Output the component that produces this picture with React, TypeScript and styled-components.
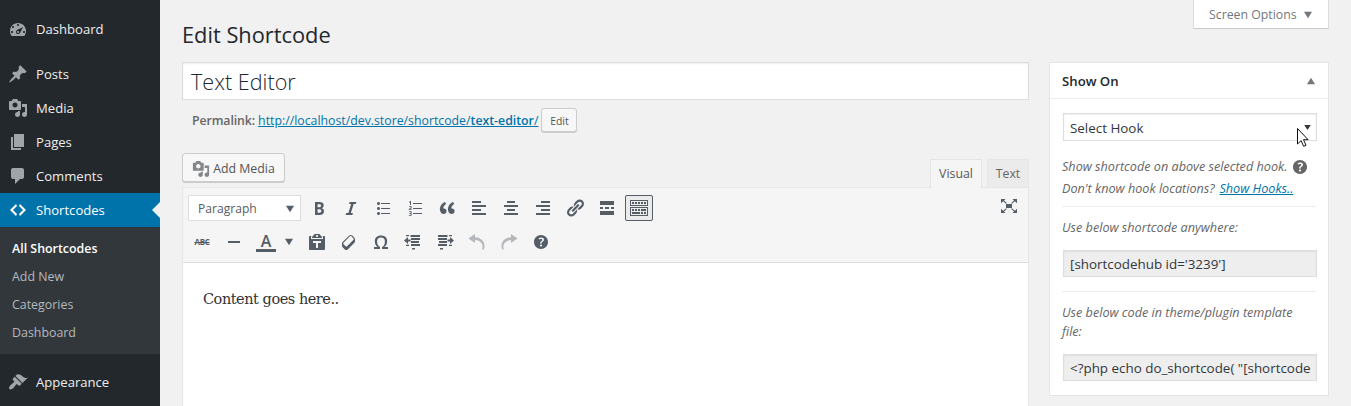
import React from "react";
import styled, { createGlobalStyle } from "styled-components";

const GlobalStyle = createGlobalStyle`
  *, *::before, *::after { box-sizing: border-box; }
  body { margin: 0; background: #f1f1f1; overflow: hidden; }
`;

const icons = {
  dashboard: "M3.76 17.01h12.48C17.34 15.63 18 13.9 18 12c0-4.41-3.58-8-8-8s-8 3.59-8 8c0 1.9.66 3.63 1.76 5.01zM9 6c0-.55.45-1 1-1s1 .45 1 1c0 .56-.45 1-1 1s-1-.44-1-1zM4 8c0-.55.45-1 1-1s1 .45 1 1c0 .56-.45 1-1 1s-1-.44-1-1zm4.52 3.4c.84-.83 6.51-3.5 6.51-3.5s-2.66 5.68-3.49 6.51c-.84.84-2.18.84-3.02 0-.83-.83-.83-2.18 0-3.01zM3 13c0-.55.45-1 1-1s1 .45 1 1c0 .56-.45 1-1 1s-1-.44-1-1zm6 0c0-.55.45-1 1-1s1 .45 1 1c0 .56-.45 1-1 1s-1-.44-1-1zm6 0c0-.55.45-1 1-1s1 .45 1 1c0 .56-.45 1-1 1s-1-.44-1-1z",
  post: "M10.44 3.02l1.82-1.82 6.36 6.35-1.83 1.82c-1.05-.68-2.48-.57-3.41.36l-.75.75c-.92.93-1.04 2.35-.35 3.41l-1.83 1.82-2.41-2.41-2.8 2.79c-.42.42-3.38 2.71-3.8 2.29s1.86-3.39 2.28-3.81l2.79-2.79L4.1 9.36l1.83-1.82c1.05.69 2.48.57 3.4-.36l.75-.75c.93-.92 1.05-2.35.36-3.41z",
  media: "M13 11V4c0-.55-.45-1-1-1h-1.67L9 1H5L3.67 3H2c-.55 0-1 .45-1 1v7c0 .55.45 1 1 1h10c.55 0 1-.45 1-1zM7 4.5c1.38 0 2.5 1.12 2.5 2.5S8.38 9.5 7 9.5 4.5 8.38 4.5 7 5.62 4.5 7 4.5zM14 6h5v10.5c0 1.38-1.12 2.5-2.5 2.5S14 17.88 14 16.5s1.12-2.5 2.5-2.5c.17 0 .34.02.5.05V9h-3V6zm-4 8.05V13h2v3.5c0 1.38-1.12 2.5-2.5 2.5S7 17.88 7 16.5 8.12 14 9.5 14c.17 0 .34.02.5.05z",
  page: "M6 15V2h10v13H6zm-1 1h8v2H3V5h2v11z",
  comments: "M5 2h9c1.1 0 2 .9 2 2v7c0 1.1-.9 2-2 2h-2l-5 5v-5H5c-1.1 0-2-.9-2-2V4c0-1.1.9-2 2-2z",
  code: "M9 6l-4 4 4 4-1 2-6-6 6-6zm2 8l4-4-4-4 1-2 6 6-6 6z",
  appearance: "M14.48 11.06L7.41 3.99l1.5-1.5c.5-.56 2.3-.47 3.51.32 1.21.8 1.43 1.28 2.91 2.1 1.18.64 2.45 1.26 4.45.85zm-.71.71L6.7 4.7 4.93 6.47c-.39.39-.39 1.02 0 1.41l1.06 1.06c.39.39.39 1.03 0 1.42-.6.6-1.43 1.11-2.21 1.69-.35.26-.7.53-1.01.84C1.43 14.23.4 16.08 1.4 17.07c.99 1 2.84-.03 4.18-1.36.31-.31.58-.66.85-1.02.57-.78 1.08-1.61 1.69-2.21.39-.39 1.02-.39 1.41 0l1.06 1.06c.39.39 1.02.39 1.41 0z",
  bold: "M6 4v13h4.54c1.37 0 2.46-.33 3.26-1 .8-.66 1.2-1.58 1.2-2.77 0-.84-.17-1.51-.51-2.01s-.9-.85-1.67-1.03v-.09c.57-.1 1.02-.4 1.36-.9s.51-1.13.51-1.91c0-1.14-.39-1.98-1.17-2.5C12.75 4.26 11.5 4 9.78 4H6zm2.57 5.15V6.26h1.36c.73 0 1.27.11 1.61.32.34.22.51.58.51 1.07 0 .54-.16.92-.47 1.15s-.82.35-1.51.35h-1.5zm0 2.19h1.6c1.44 0 2.16.53 2.16 1.61 0 .6-.17 1.05-.51 1.34s-.86.43-1.57.43H8.57v-3.38z",
  italic: "M14.78 6h-2.13l-2.8 9h2.12l-.62 2H4.6l.62-2h2.14l2.8-9H8.03l.62-2h6.75z",
  bullets: "M5.5 7C4.67 7 4 6.33 4 5.5 4 4.68 4.67 4 5.5 4 6.32 4 7 4.68 7 5.5 7 6.33 6.32 7 5.5 7zM8 5h9v1H8V5zm-2.5 7c-.83 0-1.5-.67-1.5-1.5C4 9.68 4.67 9 5.5 9c.82 0 1.5.68 1.5 1.5 0 .83-.68 1.5-1.5 1.5zM8 10h9v1H8v-1zm-2.5 7c-.83 0-1.5-.67-1.5-1.5 0-.82.67-1.5 1.5-1.5.82 0 1.5.68 1.5 1.5 0 .83-.68 1.5-1.5 1.5zM8 15h9v1H8v-1z",
  numbers: "M8 5h9v1H8zM8 10h9v1H8zM8 15h9v1H8zM4 4l1.3-1h.7v4H5V4.4l-.7.4zM4 8.3h2.6v2L5 11.200h1.7v.8H3.800v-1l1.900-1.300v-.6H4zM4 13.300h2.600v4.400H3.800v-.8h1.900v-1H4.500v-.8h1.200v-1H4z",
  quote: "M9.49 13.22c0-.74-.2-1.38-.61-1.9-.62-.78-1.83-.88-2.53-.72-.29-1.65 1.11-3.75 2.92-4.65L7.88 4c-2.73 1.3-5.42 4.28-4.96 8.05C3.21 14.43 4.59 16 6.54 16c.85 0 1.56-.25 2.12-.75s.83-1.18.83-2.03zm8.05 0c0-.74-.2-1.38-.61-1.9-.63-.78-1.83-.88-2.53-.72-.29-1.65 1.11-3.75 2.92-4.65L15.93 4c-2.73 1.3-5.41 4.28-4.95 8.05.29 2.38 1.66 3.95 3.61 3.95.85 0 1.56-.25 2.12-.75s.83-1.18.83-2.03z",
  left: "M12 5V3H3v2h9zm5 4V7H3v2h14zm-5 4v-2H3v2h9zm5 4v-2H3v2h14z",
  center: "M14 5V3H6v2h8zm3 4V7H3v2h14zm-3 4v-2H6v2h8zm3 4v-2H3v2h14z",
  right: "M17 5V3H8v2h9zm0 4V7H3v2h14zm0 4v-2H8v2h9zm0 4v-2H3v2h14z",
  link: "M17.74 2.76c1.68 1.69 1.68 4.41 0 6.1l-1.53 1.52c-1.12 1.12-2.7 1.47-4.14 1.09l2.62-2.61.76-.77.76-.76c.84-.84.84-2.2 0-3.04-.84-.85-2.2-.85-3.04 0l-.77.76-3.38 3.38c-.37-1.44-.02-3.02 1.1-4.14l1.52-1.53c1.69-1.68 4.42-1.68 6.1 0zM8.59 13.43l5.34-5.34c.42-.42.42-1.1 0-1.52-.44-.43-1.13-.39-1.53 0l-5.33 5.34c-.42.42-.42 1.1 0 1.52.44.43 1.13.39 1.52 0zm-.76 2.29l4.14-4.15c.38 1.44.03 3.02-1.09 4.14l-1.52 1.53c-1.69 1.68-4.41 1.68-6.1 0-1.68-1.68-1.68-4.42 0-6.1l1.53-1.52c1.12-1.12 2.7-1.47 4.14-1.1l-4.14 4.15c-.85.84-.85 2.2 0 3.05.84.84 2.2.84 3.04 0z",
  more: "M17 7V3H3v4h14zM6 11V9H3v2h3zm6 0V9H8v2h4zm5 0V9h-3v2h3zm0 6v-4H3v4h14z",
  kitchen: "M19 2v6H1V2h18zm-1 5V3H2v4h16zM5 4v2H3V4h2zm3 0v2H6V4h2zm3 0v2H9V4h2zm3 0v2h-2V4h2zm3 0v2h-2V4h2zm2 5v9H1V9h18zm-1 8v-7H2v7h16zM5 11v2H3v-2h2zm3 0v2H6v-2h2zm3 0v2H9v-2h2zm6 0v2h-5v-2h5zm-6 3v2H3v-2h8zm3 0v2h-2v-2h2zm3 0v2h-2v-2h2z",
  rule: "M4 9h12v2H4z",
  paste: "M12.38 2L15 5v1H5V5l2.64-3h4.74zM10 5c.55 0 1-.44 1-1 0-.55-.45-1-1-1s-1 .45-1 1c0 .56.45 1 1 1zm5.45-1H17c.55 0 1 .45 1 1v12c0 .56-.45 1-1 1H3c-.55 0-1-.44-1-1V5c0-.55.45-1 1-1h1.55L4 4.63V7h12V4.63zM14 11V9H6v2h3v5h2v-5h3z",
  eraser: "M14.29 4.59l1.1 1.11c.41.4.61.94.61 1.47v2.12c0 .53-.2 1.07-.61 1.47l-6.63 6.63c-.4.41-.94.61-1.47.61s-1.07-.2-1.47-.61l-1.11-1.1-1.1-1.11c-.41-.4-.61-.94-.61-1.47v-2.12c0-.54.2-1.07.61-1.48l6.63-6.62c.4-.41.94-.61 1.47-.61s1.06.2 1.47.61zm-6.21 9.7l6.42-6.42c.39-.39.39-1.03 0-1.43L12.36 4.3c-.19-.19-.45-.29-.72-.29s-.52.1-.71.29l-6.42 6.42c-.39.4-.39 1.04 0 1.43l2.14 2.14c.38.38 1.04.38 1.43 0z",
  omega: "M10 5.4c1.27 0 2.24.36 2.91 1.08.66.71 1 1.76 1 3.13 0 1.28-.23 2.37-.69 3.27-.47.89-1.27 1.52-2.22 2.12v2h6v-2h-3.69c.92-.64 1.62-1.34 2.12-2.34.49-1.01.74-2.13.74-3.35 0-1.78-.55-3.19-1.65-4.22S11.92 3.54 10 3.54s-3.43.53-4.52 1.57c-1.1 1.04-1.65 2.44-1.65 4.2 0 1.21.24 2.31.73 3.33.48 1.01 1.19 1.71 2.1 2.36H3v2h6v-2c-.98-.64-1.8-1.28-2.24-2.17-.45-.89-.67-1.96-.67-3.22 0-1.37.33-2.41 1-3.13C7.75 5.76 8.72 5.4 10 5.4z",
  outdent: "M3 3h3v1.300H3zM7.500 3H17v2H7.500zM8 6h9v2H8zM8 9h8v2H8zM8 12h9v2H8zM3 12.700h3V14H3zM9 16h3v1.600H9zM1 8.500L5 5v2.500h2.500v2H5V12z",
  indent: "M14 3h3v1.300h-3zM3 3h9.500v2H3zM3 6h9v2H3zM4 9h8v2H4zM3 12h9v2H3zM14 12.700h3V14h-3zM5 16h3v1.600H5zM19 8.500L15 5v2.500h-2.500v2H15V12z",
  undo: "M8 2v3.200c6 .3 9.500 4.300 9.500 8.800 0 1.200-.2 2.300-.6 3.500h-1.700c.3-1 .4-1.900.4-2.700 0-3.800-2.900-6.500-7.600-6.700V11L1.500 6.500z",
  help: "M17 10c0-3.87-3.14-7-7-7-3.87 0-7 3.13-7 7s3.13 7 7 7c3.86 0 7-3.13 7-7zm-6.3 1.48H9.14v-.43c0-.38.08-.7.24-.98s.46-.57.88-.89c.41-.29.68-.53.81-.71.14-.18.2-.39.2-.62 0-.25-.09-.44-.28-.58-.19-.13-.45-.19-.79-.19-.58 0-1.25.15-2 .46l-.64-1.28c.87-.49 1.8-.74 2.77-.74.81 0 1.45.2 1.92.58.48.39.71.91.71 1.55 0 .43-.09.8-.29 1.11-.19.32-.57.67-1.11 1.06-.38.28-.61.49-.71.63-.1.15-.15.34-.15.57v.46zm-1.47 2.74c-.18-.17-.27-.42-.27-.73 0-.33.08-.58.26-.75s.43-.25.77-.25c.32 0 .57.09.75.26s.27.42.27.74c0 .3-.09.55-.27.72-.18.18-.43.27-.75.27-.33 0-.58-.09-.76-.26z",
  fullscreen: "M7 8h6v4H7zM2 3h4.500L5 4.500l2.800 2.400-.7.800-3-2.400L2 7.300zM18 3h-4.500L15 4.500l-2.800 2.400.7.800 3-2.400L18 7.300zM2 17h4.500L5 15.500l2.800-2.400-.7-.8-3 2.400L2 12.700zM18 17h-4.500l1.500-1.500-2.800-2.400.7-.8 3 2.400 2.100-2z",
  caretDown: "M5 6h10l-5 8z",
  caretUp: "M5 14h10l-5-8z",
};

type IconName = keyof typeof icons;

const Svg = styled.svg`
  display: block;
  flex: none;
  fill: currentColor;
`;

const Icon = ({ name, size = 20, flip = false }: { name: IconName; size?: number; flip?: boolean }) => (
  <Svg width={size} height={size} viewBox="0 0 20 20" fillRule={name === "outdent" || name === "indent" || name === "fullscreen" ? "nonzero" : "evenodd"}>
    <path d={icons[name]} transform={flip ? "matrix(-1 0 0 1 20 0)" : undefined} />
  </Svg>
);

const Page = styled.div`
  display: flex;
  width: 1351px;
  height: 406px;
  overflow: hidden;
  background: #f1f1f1;
  color: #444;
  font: 12.3px/18px "Open Sans", "Noto Sans", sans-serif;
`;

const Sidebar = styled.nav`
  width: 160px;
  flex: none;
  padding-top: 12px;
  background: #23282d;
`;

const MenuItem = styled.a<{ $active?: boolean }>`
  position: relative;
  display: flex;
  align-items: center;
  height: 34px;
  padding-left: 8px;
  gap: 8px;
  font-size: 13.1px;
  color: ${(p) => (p.$active ? "#fff" : "#eee")};
  background: ${(p) => (p.$active ? "#0073aa" : "transparent")};
  svg { color: ${(p) => (p.$active ? "#fff" : "#a0a5aa")}; }
`;

const ActiveArrow = styled.i`
  position: absolute;
  right: 0;
  top: 9px;
  border: 8px solid transparent;
  border-right-color: #f1f1f1;
  border-left: 0;
`;

const MenuGap = styled.div`
  height: 11px;
`;

const Submenu = styled.div`
  padding: 8px 12px 7px;
  background: #32373c;
`;

const SubItem = styled.a<{ $current?: boolean }>`
  display: flex;
  align-items: center;
  height: 28px;
  color: ${(p) => (p.$current ? "#fff" : "#b4b9be")};
  font-size: 12.4px;
  font-weight: ${(p) => (p.$current ? 600 : 400)};
`;

const Main = styled.main`
  display: flex;
  flex-direction: column;
  flex: 1;
  padding: 0 22px;
`;

const TopBar = styled.header`
  display: flex;
  flex: none;
  justify-content: space-between;
  height: 62px;
`;

const Heading = styled.h1`
  margin: 20px 0 0;
  font-size: 21.8px;
  line-height: 30px;
  font-weight: 400;
  color: #23282d;
`;

const ScreenOptions = styled.button`
  display: flex;
  align-items: center;
  width: 136px;
  height: 29px;
  padding: 1px 13px 0 15px;
  gap: 3px;
  border: 1px solid #ddd;
  border-top: 0;
  border-bottom-color: #ccc;
  background: #fff;
  color: #72777c;
  font: inherit;
  white-space: nowrap;
`;

const Columns = styled.div`
  display: flex;
  gap: 20px;
  align-items: flex-start;
`;

const EditColumn = styled.section`
  width: 847px;
`;

const TitleField = styled.div`
  height: 38px;
  padding: 0 8px;
  border: 1px solid #ddd;
  background: #fff;
  box-shadow: inset 0 1px 2px rgba(0, 0, 0, 0.07);
  color: #23282d;
  font-size: 21.6px;
  font-weight: 300;
  line-height: 37px;
`;

const Permalink = styled.div`
  display: flex;
  align-items: center;
  height: 24px;
  margin-top: 8px;
  padding-left: 10px;
  gap: 3px;
  color: #666;
  > strong, > a { padding-top: 2px; }
  strong { font-weight: 600; }
  > strong { letter-spacing: -0.08px; }
  a { color: #0073aa; text-decoration: underline; }
`;

const Button = styled.button<{ $small?: boolean }>`
  display: flex;
  align-items: center;
  justify-content: center;
  gap: 3px;
  width: ${(p) => (p.$small ? 36 : 103)}px;
  height: ${(p) => (p.$small ? 24 : 29)}px;
  padding: ${(p) => (p.$small ? 1 : 2)}px 0 0;
  border: 1px solid #ccc;
  border-radius: 3px;
  background: #f7f7f7;
  box-shadow: 0 1px 0 #ccc;
  color: #555;
  font: inherit;
  font-size: ${(p) => (p.$small ? 10.4 : 12.3)}px;
  svg { color: #82878c; }
`;

const EditorTools = styled.div`
  display: flex;
  justify-content: space-between;
  height: 34px;
  margin-top: 21px;
`;

const Tabs = styled.div`
  display: flex;
  gap: 5px;
  margin-top: 6px;
`;

const Tab = styled.button<{ $active?: boolean }>`
  width: ${(p) => (p.$active ? 52 : 42)}px;
  height: ${(p) => (p.$active ? 29 : 28)}px;
  padding: 0;
  border: 1px solid #e5e5e5;
  border-bottom: 0;
  background: ${(p) => (p.$active ? "#f5f5f5" : "#ebebeb")};
  color: ${(p) => (p.$active ? "#555" : "#666")};
  font: inherit;
  z-index: 1;
`;

const Editor = styled.div`
  border: 1px solid #e5e5e5;
  background: #fff;
`;

const Toolbar = styled.div`
  display: flex;
  justify-content: space-between;
  height: 75px;
  padding: 7px 5px;
  border-bottom: 1px solid #ddd;
  background: #f5f5f5;
  color: #555d66;
`;

const ToolRows = styled.div`
  display: flex;
  flex-direction: column;
  gap: 8px;
`;

const ToolRow = styled.div`
  display: flex;
  gap: 4px;
  height: 26px;
`;

const Tool = styled.span<{ $pressed?: boolean; $faded?: boolean }>`
  display: flex;
  align-items: center;
  justify-content: center;
  width: 28px;
  height: 26px;
  border: 1px solid ${(p) => (p.$pressed ? "#555d66" : "transparent")};
  border-radius: 2px;
  background: ${(p) => (p.$pressed ? "#ebebeb" : "transparent")};
  opacity: ${(p) => (p.$faded ? 0.4 : 1)};
`;

const CaretTool = styled(Tool)`
  width: 16px;
  margin: 0 2px 0 -3px;
`;

const FullscreenTool = styled(Tool)`
  margin-top: -2px;
`;

const Strike = styled.span`
  font-size: 8px;
  font-weight: 700;
  letter-spacing: -0.3px;
  text-decoration: line-through;
`;

const ColorLetter = styled.span`
  width: 20px;
  height: 19px;
  border-bottom: 3px solid #555d66;
  font-size: 16px;
  font-weight: 600;
  line-height: 16px;
  text-align: center;
`;

const FormatSelect = styled.div`
  display: flex;
  align-items: center;
  justify-content: space-between;
  width: 113px;
  padding: 1px 2px 0 9px;
  border: 1px solid #ddd;
  background: #fff;
  color: #555d66;
  font-size: 12.1px;
`;

const Content = styled.p`
  margin: 0;
  height: 160px;
  padding: 23px 20px;
  color: #333;
  font: 14.5px/26px "DejaVu Serif", serif;
  letter-spacing: -0.47px;
`;

const Panel = styled.aside`
  width: 280px;
  height: 334px;
  border: 1px solid #e5e5e5;
  background: #fff;
`;

const PanelHeader = styled.h2`
  display: flex;
  align-items: center;
  justify-content: space-between;
  height: 36px;
  margin: 0;
  padding: 0 9px 0 12px;
  border-bottom: 1px solid #eee;
  color: #23282d;
  font-size: 13.2px;
  font-weight: 600;
  svg { color: #72777c; }
`;

const PanelBody = styled.div`
  padding: 14px 12px 0;
`;

const Field = styled.div<{ $readOnly?: boolean }>`
  display: flex;
  align-items: center;
  justify-content: space-between;
  width: 254px;
  height: ${(p) => (p.$readOnly ? 27 : 28)}px;
  margin: ${(p) => (p.$readOnly ? 13 : 0)}px 0 0 1px;
  padding: 1px 2px 0 6px;
  border: 1px solid #ddd;
  background: ${(p) => (p.$readOnly ? "#eee" : "#fff")};
  box-shadow: inset 0 1px 2px rgba(0, 0, 0, 0.07);
  color: #32373c;
  font-size: 13.4px;
  white-space: nowrap;
`;

const Hint = styled.p<{ $top: number; $line?: number }>`
  margin: ${(p) => p.$top}px 0 0;
  color: #666;
  font-size: 12.65px;
  font-style: italic;
  line-height: ${(p) => p.$line ?? 19}px;
  white-space: nowrap;
  a { margin-left: 1.5px; color: #0073aa; text-decoration: underline; }
`;

const HintRow = styled.span`
  display: flex;
  align-items: center;
  height: 22px;
  gap: 3px;
  svg { margin-top: 2px; }
`;

const Divider = styled.hr<{ $top: number }>`
  width: 254px;
  margin: ${(p) => p.$top}px 0 0;
  border: 0;
  border-top: 1px solid #eee;
`;

const Pointer = styled.svg`
  position: absolute;
  left: 1296px;
  top: 127px;
`;

const firstRow: IconName[] = ["bold", "italic", "bullets", "numbers", "quote", "left", "center", "right", "link", "more"];

export default function App() {
  return (
    <Page>
      <GlobalStyle />
      <Sidebar>
        <MenuItem><Icon name="dashboard" />Dashboard</MenuItem>
        <MenuGap />
        <MenuItem><Icon name="post" />Posts</MenuItem>
        <MenuItem><Icon name="media" />Media</MenuItem>
        <MenuItem><Icon name="page" />Pages</MenuItem>
        <MenuItem><Icon name="comments" />Comments</MenuItem>
        <MenuItem $active><Icon name="code" />Shortcodes<ActiveArrow /></MenuItem>
        <Submenu>
          <SubItem $current>All Shortcodes</SubItem>
          <SubItem>Add New</SubItem>
          <SubItem>Categories</SubItem>
          <SubItem>Dashboard</SubItem>
        </Submenu>
        <MenuGap />
        <MenuItem><Icon name="appearance" />Appearance</MenuItem>
      </Sidebar>
      <Main>
        <TopBar>
          <Heading>Edit Shortcode</Heading>
          <ScreenOptions>Screen Options<Icon name="caretDown" size={16} /></ScreenOptions>
        </TopBar>
        <Columns>
          <EditColumn>
            <TitleField>Text Editor</TitleField>
            <Permalink>
              <strong>Permalink:</strong>
              <a>http://localhost/dev.store/shortcode/<strong>text-editor</strong>/</a>
              <Button $small>Edit</Button>
            </Permalink>
            <EditorTools>
              <Button><Icon name="media" size={18} />Add Media</Button>
              <Tabs>
                <Tab $active>Visual</Tab>
                <Tab>Text</Tab>
              </Tabs>
            </EditorTools>
            <Editor>
              <Toolbar>
                <ToolRows>
                  <ToolRow>
                    <FormatSelect>Paragraph<Icon name="caretDown" size={16} /></FormatSelect>
                    {firstRow.map((name) => (
                      <Tool key={name}><Icon name={name} /></Tool>
                    ))}
                    <Tool $pressed><Icon name="kitchen" /></Tool>
                  </ToolRow>
                  <ToolRow>
                    <Tool><Strike>ABC</Strike></Tool>
                    <Tool><Icon name="rule" /></Tool>
                    <Tool><ColorLetter>A</ColorLetter></Tool>
                    <CaretTool><Icon name="caretDown" size={16} /></CaretTool>
                    <Tool><Icon name="paste" /></Tool>
                    <Tool><Icon name="eraser" /></Tool>
                    <Tool><Icon name="omega" /></Tool>
                    <Tool><Icon name="outdent" /></Tool>
                    <Tool><Icon name="indent" /></Tool>
                    <Tool $faded><Icon name="undo" /></Tool>
                    <Tool $faded><Icon name="undo" flip /></Tool>
                    <Tool><Icon name="help" /></Tool>
                  </ToolRow>
                </ToolRows>
                <FullscreenTool><Icon name="fullscreen" /></FullscreenTool>
              </Toolbar>
              <Content>Content goes here..</Content>
            </Editor>
          </EditColumn>
          <Panel>
            <PanelHeader>Show On<Icon name="caretUp" size={16} /></PanelHeader>
            <PanelBody>
              <Field>Select Hook<Icon name="caretDown" size={13} /></Field>
              <Hint $top={14} $line={22}>
                <HintRow>Show shortcode on above selected hook. <Icon name="help" /></HintRow>
                Don't know hook locations? <a>Show Hooks..</a>
              </Hint>
              <Divider $top={7} />
              <Hint $top={11}>Use below shortcode anywhere:</Hint>
              <Field $readOnly>[shortcodehub id='3239']</Field>
              <Divider $top={14} />
              <Hint $top={11}>Use below code in theme/plugin template<br />file:</Hint>
              <Field $readOnly>&lt;?php echo do_shortcode( "[shortcode</Field>
            </PanelBody>
          </Panel>
        </Columns>
      </Main>
      <Pointer width="13" height="21" viewBox="0 0 13 21">
        <path d="M1.500 1.500v15.500l3.600-3.400 2.500 5.700 2.400-1-2.500-5.600h4.600z" fill="#fff" stroke="#111" strokeWidth="1" />
      </Pointer>
    </Page>
  );
}
